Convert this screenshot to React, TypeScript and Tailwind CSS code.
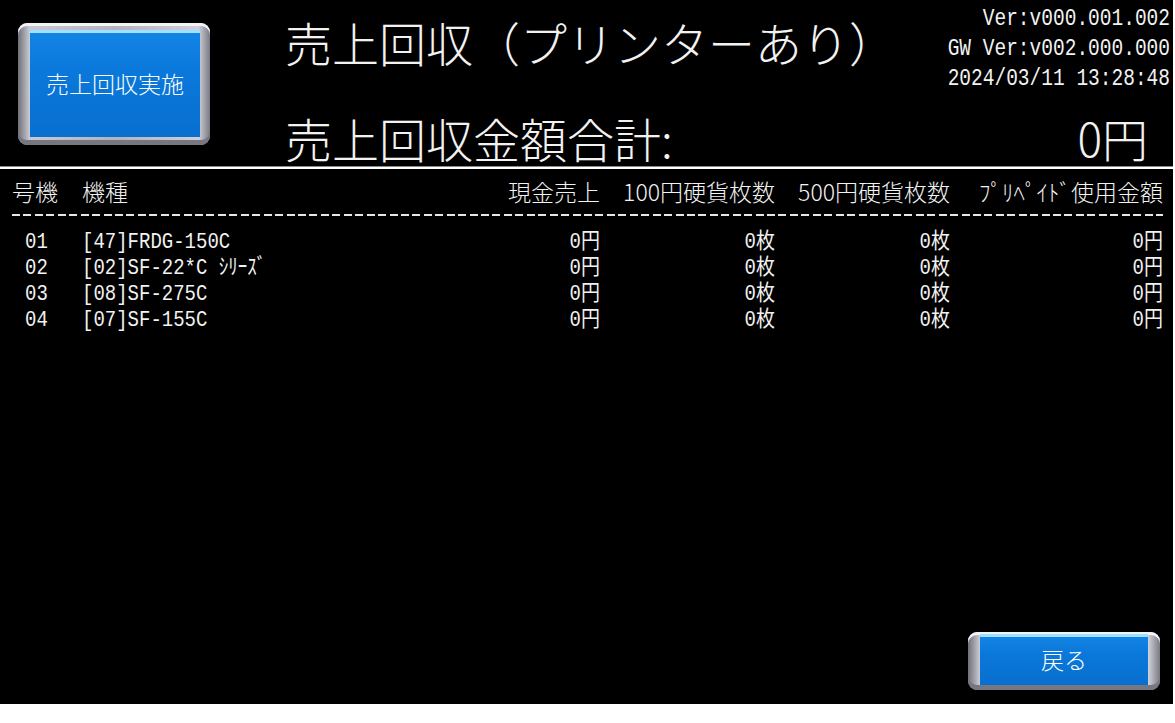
import clsx from "clsx";

type Row = {
  no: string;
  model: string;
  cash: string;
  coin100: string;
  coin500: string;
  prepaid: string;
};

const rows: Row[] = [
  { no: "01", model: "[47]FRDG-150C", cash: "0円", coin100: "0枚", coin500: "0枚", prepaid: "0円" },
  { no: "02", model: "[02]SF-22*C ｼﾘｰｽﾞ", cash: "0円", coin100: "0枚", coin500: "0枚", prepaid: "0円" },
  { no: "03", model: "[08]SF-275C", cash: "0円", coin100: "0枚", coin500: "0枚", prepaid: "0円" },
  { no: "04", model: "[07]SF-155C", cash: "0円", coin100: "0枚", coin500: "0枚", prepaid: "0円" },
];

const cols = "grid grid-cols-[70px_343px_175px_175px_175px_213px]";
const mono = "font-['Liberation_Mono','Noto_Sans_CJK_JP',monospace]";
const cjk = "font-['Noto_Sans_CJK_JP',sans-serif]";

function PanelButton({ label, className }: { label: string; className: string }) {
  return (
    <button
      type="button"
      className={clsx(
        "block rounded-[9px] bg-[linear-gradient(90deg,#6f6f78_0%,#c9c9d2_6%,#b3b3bc_50%,#cfcfd8_94%,#7a7a84_100%)] shadow-[inset_0_3px_0_#f2f2f7,inset_0_-5px_0_#777781]",
        className
      )}
    >
      <span
        className={clsx(
          "flex h-full w-full items-center justify-center bg-[linear-gradient(180deg,#1385e6_0%,#0a78da_40%,#086fcf_100%)] text-[23px] leading-none font-light text-white shadow-[inset_0_3px_0_#9fe2ff]",
          cjk
        )}
      >
        {label}
      </span>
    </button>
  );
}

export default function App() {
  return (
    <div className="min-h-screen bg-white">
      <div className="flex h-[704px] w-[1173px] flex-col bg-black text-[#f2f2f2]">
        {/* title bar */}
        <div className="flex h-[166px]">
          <div className="pl-[18px] pt-[23px]">
            <PanelButton
              label="売上回収実施"
              className="h-[122px] w-[192px] pb-[8px] pl-[12px] pr-[10px] pt-[7px]"
            />
          </div>
          <div className="ml-[75px] flex flex-1 flex-col">
            <div className="flex h-[114px] items-start justify-between">
              <h1 className={clsx("mt-[18px] text-[47px] leading-none font-light", cjk)}>
                売上回収（プリンターあり）
              </h1>
              <div className={clsx("mr-[3px] mt-[4px] text-right text-[19.5px] leading-[30px]", mono)}>
                <div className="origin-center scale-y-[1.25]">Ver:v000.001.002</div>
                <div className="origin-center scale-y-[1.25]">GW Ver:v002.000.000</div>
                <div className="origin-center scale-y-[1.25]">2024/03/11 13:28:48</div>
              </div>
            </div>
            <div className="flex items-start justify-between">
              <div className={clsx("text-[47px] leading-none font-light", cjk)}>売上回収金額合計:</div>
              <div className={clsx("mr-[25px] text-[46px] leading-none font-light", cjk)}>0円</div>
            </div>
          </div>
        </div>

        <div className="h-[1px] bg-[#8a8a8a]" />
        <div className="h-[2px] bg-white" />

        {/* collection table */}
        <div className="pl-[12px] pt-[7px]">
          <div className={clsx(cols, "text-[23px] leading-[30px] font-light", cjk)}>
            <div>号機</div>
            <div>機種</div>
            <div className="text-right">現金売上</div>
            <div className="text-right">100円硬貨枚数</div>
            <div className="text-right">500円硬貨枚数</div>
            <div className="text-right">ﾌﾟﾘﾍﾟｲﾄﾞ使用金額</div>
          </div>
          <div className="mt-[8px] mr-[10px] h-[2px] bg-[repeating-linear-gradient(90deg,#e6e6e6_0px,#e6e6e6_8px,transparent_8px,transparent_11.44px)]" />
          <div className={clsx("mt-[13px] text-[19px] leading-[26px]", mono)}>
            {rows.map((row) => (
              <div key={row.no} className={clsx(cols, "h-[26px]")}>
                <div className="origin-center scale-y-[1.15] pl-[13px]">{row.no}</div>
                <div className="origin-center scale-y-[1.15]">{row.model}</div>
                <div className="origin-center scale-y-[1.15] text-right">{row.cash}</div>
                <div className="origin-center scale-y-[1.15] text-right">{row.coin100}</div>
                <div className="origin-center scale-y-[1.15] text-right">{row.coin500}</div>
                <div className="origin-center scale-y-[1.15] text-right">{row.prepaid}</div>
              </div>
            ))}
          </div>
        </div>

        <div className="flex-1" />

        <div className="flex justify-end pb-[14px] pr-[13px]">
          <PanelButton label="戻る" className="h-[58px] w-[192px] px-[12px] pb-[5px] pt-[2px]" />
        </div>
      </div>
    </div>
  );
}
